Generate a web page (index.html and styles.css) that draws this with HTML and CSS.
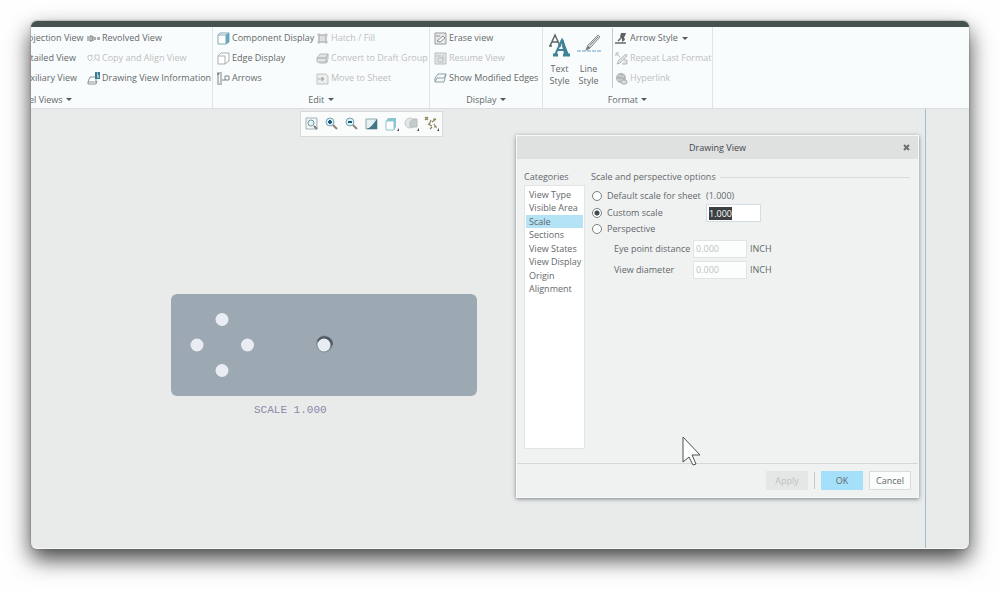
FILE: index.html
```html
<!DOCTYPE html>
<html lang="en">
<head>
<meta charset="utf-8">
<title>Drawing View</title>
<link rel="stylesheet" href="styles.css">
</head>
<body>
<main class="window">
  <div class="titlebar"></div>
  <header class="ribbon">
    <section class="group group-views">
      <div class="commands views">
        <button class="cmd">Projection View</button>
        <button class="cmd"><svg class="ico" viewBox="0 0 13 13"><path d="M1 4v5M3 4h2v5H3zM6 4v5" fill="none" stroke="#777"/><path d="M7 5h2v3H7zM10 5h3v3h-3z" fill="#aaa"/></svg>Revolved View</button>
        <button class="cmd">Detailed View</button>
        <button class="cmd" disabled><svg class="ico" viewBox="0 0 13 13"><path d="M1 4l4-1v4l-2 2-2-2zM8 3h4v6l-4-3zM6 9l2-2" fill="none" stroke="#c3c7c8"/></svg>Copy and Align View</button>
        <button class="cmd">Auxiliary View</button>
        <button class="cmd"><svg class="ico" viewBox="0 0 13 13"><path d="M3 5h6v5H1zM1 10v2h8l1-3" fill="#fff" stroke="#8d9496"/><path d="M8 0h5v7H8z" fill="#397d96"/><path d="M10 3h1v3M10 1h1" stroke="#fff" fill="none"/></svg>Drawing View Information</button>
      </div>
      <button class="caption caption-left">Model Views <span class="caret"></span></button>
    </section>
    <section class="group group-edit">
      <div class="commands edit">
        <button class="cmd"><svg class="ico" viewBox="0 0 13 13"><path d="M1 3h8v9H1zM1 3l2-2h9v9l-3 2M9 3l3-2" fill="#fff" stroke="#81a9b5"/><path d="M9 3l3-2v9l-3 2z" fill="#62a9bf"/></svg>Component Display</button>
        <button class="cmd" disabled><svg class="ico" viewBox="0 0 13 13"><path d="M3 3h7v7H3zM1 3h11M1 10h11M3 1v11M10 1v11" fill="#dde0e1" stroke="#b4b9ba"/></svg>Hatch / Fill</button>
        <button class="cmd"><svg class="ico" viewBox="0 0 13 13"><path d="M1 4h7v8H1zM1 4l3-3h8v8l-4 3" fill="#fff" stroke="#a9afb1"/></svg>Edge Display</button>
        <button class="cmd" disabled><svg class="ico" viewBox="0 0 13 13"><path d="M1 6l3-4h8l-2 4zM1 6h9v4H1zM10 6l2-4v5l-2 3M3 11h7l2-2" fill="#e3e5e5" stroke="#b4b9ba"/></svg>Convert to Draft Group</button>
        <button class="cmd"><svg class="ico" viewBox="0 0 13 13"><path d="M0 1h5M0 12h5M1 2v9M4 2v9M0 3l1-2 1 2M8 4h4v4H8zM5 8h3" fill="none" stroke="#7c8385"/></svg>Arrows</button>
        <button class="cmd" disabled><svg class="ico" viewBox="0 0 13 13"><path d="M1 2h9l2 2v8H1z" fill="#eceeee" stroke="#c0c5c6"/><path d="M2 7h6M6 5l2 2-2 2z" fill="#aaafb0" stroke="#aaafb0"/></svg>Move to Sheet</button>
      </div>
      <button class="caption">Edit <span class="caret"></span></button>
    </section>
    <section class="group group-display">
      <div class="commands single">
        <button class="cmd"><svg class="ico" viewBox="0 0 13 13"><path d="M1 1h11v11H1z" fill="#e8eaea" stroke="#959b9d"/><path d="M2 4h4M3 9l6-5 2 2-5 4z" fill="#fff" stroke="#8b9193"/></svg>Erase view</button>
        <button class="cmd" disabled><svg class="ico" viewBox="0 0 13 13"><path d="M1 1h11v11H1z" fill="#e3e6e6" stroke="#b9bebf"/><path d="M2 4h5M4 6h5v4H4zM9 3v5" fill="none" stroke="#b9bebf"/></svg>Resume View</button>
        <button class="cmd"><svg class="ico" viewBox="0 0 13 13"><path d="M1 6l3-4h8l-2 8H1zM3 6h7l2-4M3 6l-2 4" fill="#f4f8f8" stroke="#8fa0a5"/></svg>Show Modified Edges</button>
      </div>
      <button class="caption">Display <span class="caret"></span></button>
    </section>
    <section class="group group-format">
      <div class="format-row">
        <button class="big"><svg class="big-ico" viewBox="0 0 24 26"><path d="M2 13L7 2l5 11M4 9h6M1 13h3M10 13h3" fill="none" stroke="#5b6467" stroke-width="1.5"/><path d="M7 22l7-15 6 15M9 17h8" fill="none" stroke="#3d8296" stroke-width="2"/><path d="M14 7l4 15M5 22h5M15 22h7" fill="none" stroke="#3d8296" stroke-width="3"/></svg>Text<br>Style</button>
        <button class="big"><svg class="big-ico" viewBox="0 0 24 26"><path d="M0 18h24" stroke="#6f9fc0" stroke-dasharray="4 1"/><path d="M9 17l2-5L21 2l2 2-10 11z" fill="#d4d7d7" stroke="#8b9193"/><path d="M9 17l2-4 2 2zM13 12l8-8" fill="#666" stroke="#8b9193"/></svg>Line<br>Style</button>
        <div class="commands single styles">
          <button class="cmd"><svg class="ico" viewBox="0 0 13 13"><path d="M0 11h11M3 9l4-4" stroke="#62696b" stroke-width="1.5"/><path d="M6 1h5l-1 3-1 1 1 3-3 2V6L5 5z" fill="#5c6365"/></svg>Arrow Style <span class="caret wide"></span></button>
          <button class="cmd" disabled><svg class="ico" viewBox="0 0 13 13"><path d="M1 1h3M1 1v3M1 1l4 4M2 12l2-4 7-6 1 2-7 7zM9 8h3v4H7" fill="#e1e4e4" stroke="#b4b9ba"/></svg>Repeat Last Format</button>
          <button class="cmd" disabled><svg class="ico" viewBox="0 0 13 13"><circle cx="6" cy="6" r="5" fill="#b3b8b9"/><path d="M3 4c2-2 3 2 6 0M2 8h6" fill="none" stroke="#dfe2e2"/><rect x="6" y="8" width="6" height="4" rx="2" fill="#ddd" stroke="#a5aaab"/></svg>Hyperlink</button>
        </div>
      </div>
      <button class="caption">Format <span class="caret"></span></button>
    </section>
  </header>

  <div class="canvas">
    <div class="sheet-edge"></div>
    <div class="viewbar">
      <button class="tool" aria-label="Refit"><svg viewBox="0 0 16 16"><path d="M2 2h11v11H2z" fill="#f2f6f7" stroke="#a4b1b7"/><circle cx="7" cy="7" r="3" fill="#e4f2f6" stroke="#789aa7"/><path d="M10 10l3 3" stroke="#7c7f7b" stroke-width="2"/></svg></button>
      <button class="tool" aria-label="Zoom in"><svg viewBox="0 0 16 16"><circle cx="6" cy="6" r="4" fill="#d8eef4" stroke="#7fa6b5"/><path d="M4 6h4M6 4v4" stroke="#1d5f7c" stroke-width="2"/><path d="M9 9l4 4" stroke="#8b8678" stroke-width="2"/></svg></button>
      <button class="tool" aria-label="Zoom out"><svg viewBox="0 0 16 16"><circle cx="6" cy="6" r="4" fill="#d8eef4" stroke="#7fa6b5"/><path d="M4 6h4" stroke="#1d5f7c" stroke-width="2"/><path d="M9 9l4 4" stroke="#8b8678" stroke-width="2"/></svg></button>
      <button class="tool" aria-label="Repaint"><svg viewBox="0 0 16 16"><path d="M2 3h11v10H2z" fill="#e5f0f2" stroke="#93a9b0"/><path d="M13 3v10H2c5-1 7-5 11-10z" fill="#417786"/></svg></button>
      <button class="tool" aria-label="Display style"><svg viewBox="0 0 16 16"><path d="M2 5h8v9H2z" fill="#fff" stroke="#8fc3cf"/><path d="M10 5l2-3v9l-2 3zM2 5l2-3h8l-2 3z" fill="#88c6d3"/><path d="M15 12v3h-2z" fill="#444"/></svg></button>
      <button class="tool" aria-label="Perspective"><svg viewBox="0 0 16 16"><circle cx="6" cy="7" r="5" fill="#e2e5e5" stroke="#c6cbcc"/><path d="M6 6l3-3h4v8H6z" fill="#c6cbcc" stroke="#b8bebf"/><path d="M15 12v3h-2z" fill="#444"/></svg></button>
      <button class="tool" aria-label="Datum display"><svg viewBox="0 0 16 16"><path d="M1 1l3 3M4 1L1 4M5 9l2-5M4 8l4 2M8 6l4-3M9 3h3M10 8l2 3M10 11h3M6 13l2-2" fill="none" stroke="#8c8055" stroke-width="1.2"/><path d="M15 12v3h-2z" fill="#444"/></svg></button>
    </div>

    <figure class="part">
      <svg class="plate" viewBox="0 0 306 102">
        <rect width="306" height="102" rx="6" fill="#9ca8b2"/>
        <g fill="#e9edf3"><circle cx="51" cy="25.500" r="6.500"/><circle cx="26" cy="51" r="6.500"/><circle cx="76.500" cy="51" r="6.500"/><circle cx="51" cy="76.500" r="6.500"/></g>
        <circle cx="153.500" cy="50" r="8.500" fill="#84909b"/><path d="M146 47a8.500 8.500 0 0 1 16 3l-3 4z" fill="#4e5962"/>
        <circle cx="153" cy="51" r="6.500" fill="#e9edf3"/>
      </svg>
      <figcaption class="scale-note">SCALE 1.000</figcaption>
    </figure>

    <form class="dialog" role="dialog" aria-labelledby="dlg-title">
      <div class="dlg-head"><span></span><h1 class="dlg-title" id="dlg-title">Drawing View</h1><button class="close" type="button" aria-label="Close"><svg viewBox="0 0 8 8"><path d="M1 1l5 5M6 1L1 6" stroke="#6b7071" stroke-width="2"/></svg></button></div>
      <div class="dlg-body">
        <nav class="categories">
          <h2 class="label">Categories</h2>
          <ul class="list">
            <li><button class="item" type="button">View Type</button></li>
            <li><button class="item" type="button">Visible Area</button></li>
            <li><button class="item selected" type="button">Scale</button></li>
            <li><button class="item" type="button">Sections</button></li>
            <li><button class="item" type="button">View States</button></li>
            <li><button class="item" type="button">View Display</button></li>
            <li><button class="item" type="button">Origin</button></li>
            <li><button class="item" type="button">Alignment</button></li>
          </ul>
        </nav>
        <fieldset class="options">
          <legend class="legend">Scale and perspective options</legend>
          <div class="option"><label class="choice"><input class="radio" type="radio" name="scale">Default scale for sheet</label><span>(1.000)</span></div>
          <div class="option"><label class="choice"><input class="radio" type="radio" name="scale" checked>Custom scale</label><input class="field active" id="custom" type="text" value="1.000" aria-label="Custom scale value"></div>
          <div class="option"><label class="choice"><input class="radio" type="radio" name="scale">Perspective</label></div>
          <div class="measure"><label class="mlabel" for="eye">Eye point distance</label><input class="field" id="eye" type="text" value="0.000" disabled><span>INCH</span></div>
          <div class="measure"><label class="mlabel" for="dia">View diameter</label><input class="field" id="dia" type="text" value="0.000" disabled><span>INCH</span></div>
        </fieldset>
      </div>
      <div class="dlg-foot">
        <button class="btn" type="button" disabled>Apply</button>
        <span class="bar"></span>
        <button class="btn primary" type="button">OK</button>
        <button class="btn plain" type="button">Cancel</button>
      </div>
    </form>

    <svg class="cursor" viewBox="0 0 20 30"><path d="M1 1v25l6-5 4 8 3-1-4-9h8z" fill="#fff" stroke="#4d5254"/></svg>
  </div>
</main>
<script src="script.js"></script>
</body>
</html>
```
FILE: styles.css
```css
* { box-sizing: border-box; }
body {
  margin: 0;
  padding: 21px 31px 41px;
  height: 100vh;
  display: flex;
  background: #fefefe;
  color: #63686a;
  font: 9px/12px "Open Sans", "Noto Sans", sans-serif;
}
button, input { font: inherit; color: inherit; margin: 0; }
button { border: 0; padding: 0; background: none; }
h1, h2 { margin: 0; font: inherit; }
.window {
  flex: 1;
  display: flex;
  flex-direction: column;
  border-radius: 6px;
  overflow: hidden;
  background: #e9ebeb;
  border-bottom: 1px solid #f6f7f7;
  box-shadow: 0 0 2px #666, 0 10px 22px rgba(0, 0, 0, .75);
}
.titlebar { height: 6px; background: #46524f; }
.ribbon {
  display: flex;
  height: 82px;
  background: #f9fcfc;
  border-bottom: 1px solid #dcdfdf;
}
.group {
  display: flex;
  flex-direction: column;
  justify-content: space-between;
  padding-top: 1px;
  border-right: 1px solid #dfe4e5;
}
.group-views { width: 182px; overflow: hidden; align-items: flex-end; }
.group-edit { width: 217px; }
.group-display { width: 113px; }
.group-format { width: 170px; }
.commands { display: grid; grid-auto-rows: 20px; }
.views { grid-template-columns: 68px 125px; }
.edit { grid-template-columns: 99px 1fr; padding-left: 4px; }
.single { padding-left: 4px; }
.cmd {
  display: flex;
  align-items: center;
  gap: 2px;
  white-space: nowrap;
  text-align: left;
}
.cmd:disabled { color: #bbc0c1; }
.ico { width: 13px; height: 13px; flex: none; }
.caption { align-self: center; height: 17px; }
.group-views .caption { align-self: flex-end; width: 202px; text-align: left; }
.caret {
  display: inline-block;
  margin-left: 1px;
  vertical-align: 2px;
  border: 3px solid transparent;
  border-top-color: #54595b;
  border-bottom: 0;
}
.wide { margin-left: 2px; }
.format-row { display: flex; padding-left: 2px; }
.big { width: 29px; padding-top: 3px; flex: none; }
.big-ico { display: block; width: 24px; height: 26px; margin: 0 auto 4px; }
.format-row .styles { border-left: 1px solid #c4c9ca; margin-left: 9px; padding-left: 2px; }

.canvas { position: relative; flex: 1; }
.sheet-edge {
  position: absolute;
  top: 0;
  bottom: 0;
  right: 43px;
  border-left: 1px solid #a3bdd0;
}
.viewbar {
  position: absolute;
  left: 269px;
  top: 2px;
  display: flex;
  gap: 4px;
  padding: 4px 2px 4px 3px;
  background: #fafcfc;
  border: 1px solid #d6dada;
}
.tool { width: 16px; height: 16px; }
.tool svg { display: block; width: 16px; height: 16px; }
.part { position: absolute; left: 140px; top: 185px; margin: 0; width: 306px; }
.plate { display: block; width: 100%; }
.scale-note {
  margin: 7px 0 0 83px;
  font: 11px/14px "Liberation Mono", monospace;
  color: #8d88a8;
}

.dialog {
  position: absolute;
  top: 26px;
  right: 50px;
  width: 403px;
  height: 363px;
  display: flex;
  flex-direction: column;
  background: #f0f2f2;
  border: 1px solid #f7f8f8;
  box-shadow: 0 1px 4px rgba(60, 75, 80, .65);
}
.dlg-head {
  display: grid;
  grid-template-columns: 1fr auto 1fr;
  align-items: center;
  height: 23px;
  padding: 0 7px;
  background: #dfe1e1;
  color: #414648;
}
.close { justify-self: end; width: 8px; height: 8px; }
.close svg { display: block; }
.dlg-body { flex: 1; display: flex; gap: 6px; padding: 12px 8px 14px 7px; }
.categories { display: flex; flex-direction: column; width: 61px; }
.label { height: 14px; }
.list {
  flex: 1;
  margin: 0;
  padding: 2px 1px;
  list-style: none;
  background: #fff;
  border: 1px solid #e1e5e5;
}
.list li { height: 13px; }
.list li:nth-child(2n) { height: 14px; }
.item { width: 100%; height: 13px; padding: 0 3px; text-align: left; white-space: nowrap; }
.selected { background: #b5e3f6; }
.options { flex: 1; border: 0; margin: 0; padding: 0; min-width: 0; }
.legend {
  display: flex;
  align-items: center;
  width: 100%;
  height: 12px;
  margin-bottom: 5px;
  padding: 0;
  gap: 4px;
}
.legend::after { content: ""; flex: 1; border-top: 1px solid #d8dbdb; }
.option { display: grid; grid-template-columns: 115px 1fr; align-items: center; height: 16px; }
.option:nth-of-type(2) { height: 17px; }
.choice { display: flex; align-items: center; gap: 5px; white-space: nowrap; }
.radio {
  appearance: none;
  width: 10px;
  height: 10px;
  margin: 0 0 0 1px;
  border: 1px solid #7d8284;
  border-radius: 50%;
  background: #fcfdfd;
}
.radio:checked { background: radial-gradient(#44494b 0 2px, #fcfdfd 3px); }
.field {
  width: 54px;
  height: 18px;
  padding: 0 2px;
  border: 1px solid #e0e4e5;
  border-radius: 0;
  background: #fff;
  outline: 0;
}
.field:disabled { color: #bfc3c4; background: #fcfdfd; }
.active { width: 55px; border-color: #d3dde3; }
.active::selection { background: #3c4042; color: #fff; }
.measure { display: flex; align-items: center; gap: 3px; height: 21px; padding-left: 23px; }
.mlabel { width: 76px; white-space: nowrap; }
.option + .measure { margin-top: 1px; }
.dlg-foot {
  display: flex;
  align-items: center;
  justify-content: flex-end;
  gap: 6px;
  height: 34px;
  padding: 0 7px;
  border-top: 1px solid #d4d8d8;
}
.btn { width: 42px; height: 19px; background: #e5e7e7; }
.btn:disabled { color: #bbc0c0; }
.primary { background: #a5e0fa; }
.plain { background: #fbfcfc; border: 1px solid #d8dcdc; }
.bar { height: 17px; border-left: 1px solid #c2c7c8; }
.cursor { position: absolute; left: 651px; top: 327px; width: 20px; height: 30px; }
```
FILE: script.js
```js
const field = document.getElementById("custom");
field.focus();
field.select();
```
